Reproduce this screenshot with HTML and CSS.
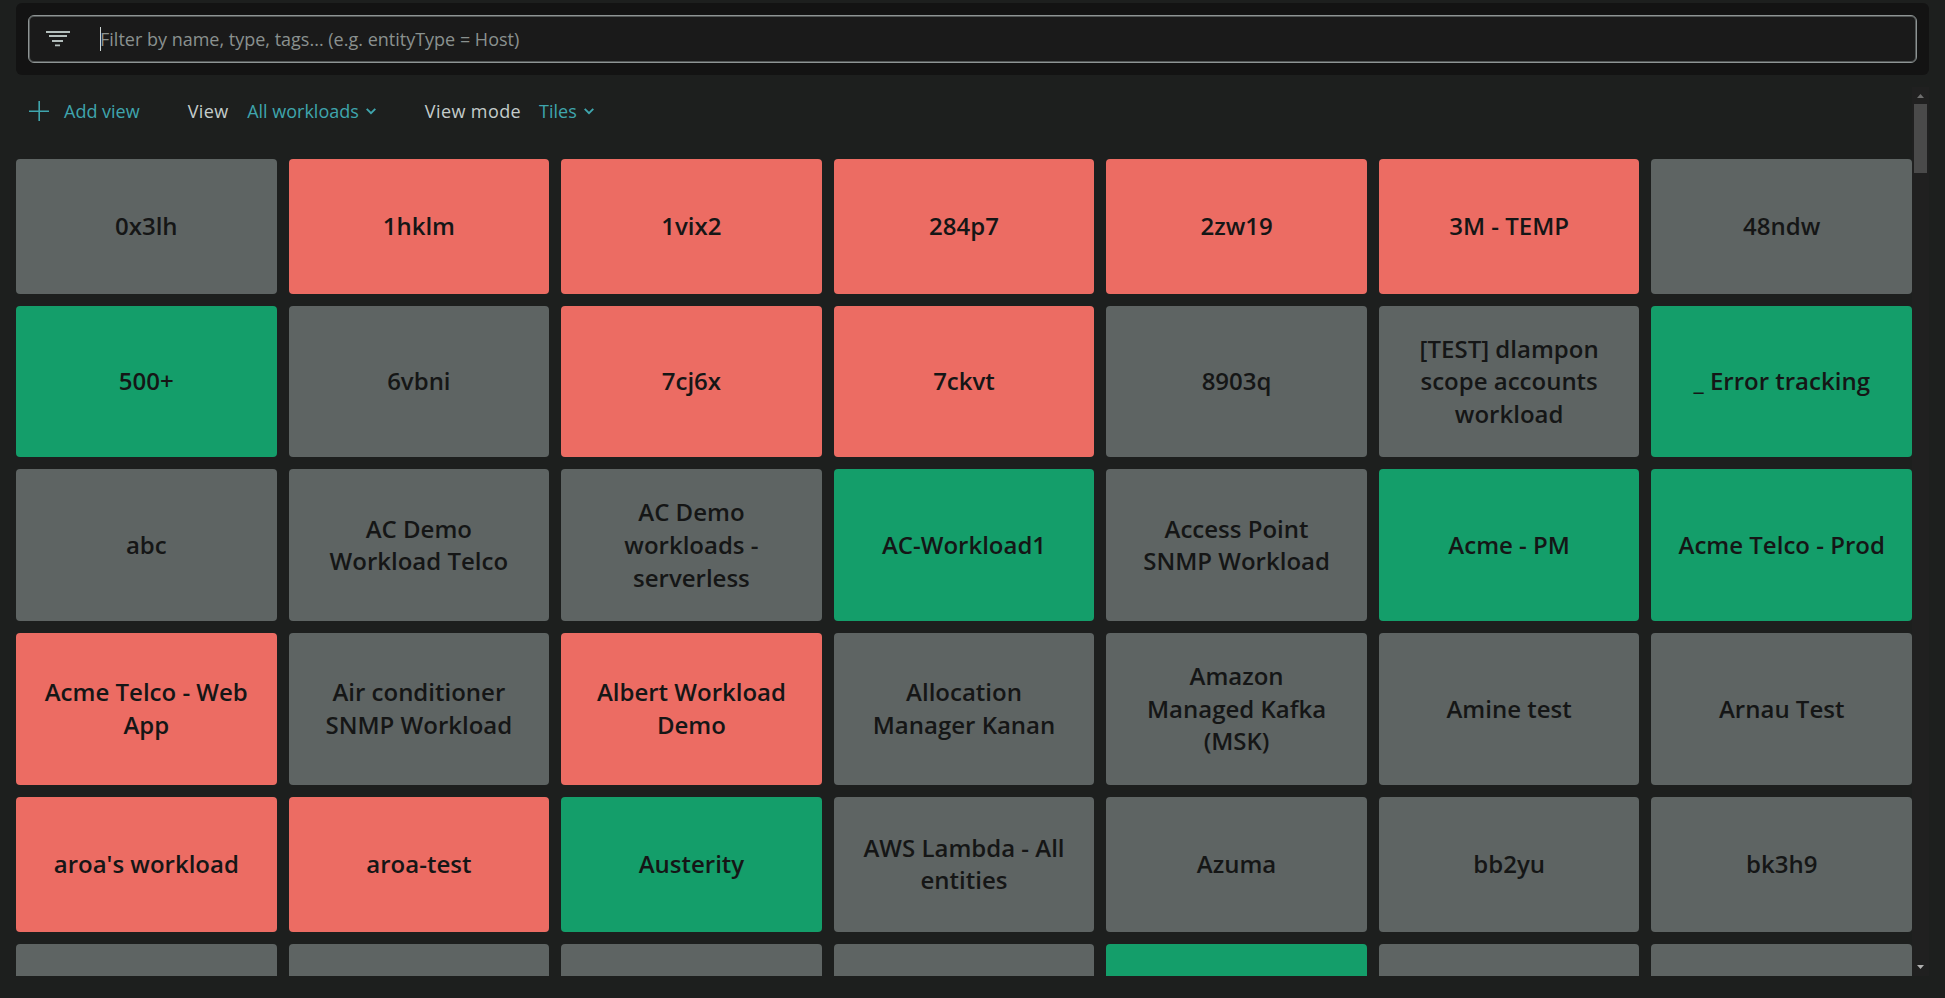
FILE: index.html
```html
<!DOCTYPE html>
<html lang="en">
<head>
<meta charset="utf-8">
<title>Workloads</title>
<link rel="stylesheet" href="styles.css">
</head>
<body>
<main class="page">
  <header class="filter-panel">
    <div class="filter">
      <svg class="filter-icon" width="24" height="16" viewBox="0 0 24 16"><path d="M0 1h24M3 5h18M6 10h11M9 14.3h5" fill="none" stroke="currentColor" stroke-width="1.8"/></svg>
      <span class="caret"></span>
      <span class="placeholder">Filter by name, type, tags... (e.g. entityType = Host)</span>
    </div>
  </header>
  <section class="content">
    <div class="scroll-area">
      <nav class="toolbar">
        <a class="add"><svg width="20" height="20" viewBox="0 0 20 20"><path d="M10.2 0v20M0 10.2h20" fill="none" stroke="currentColor" stroke-width="1.6"/></svg><span>Add view</span></a>
        <span class="label view">View</span>
        <a class="select all"><span>All workloads</span><svg width="10" height="7" viewBox="0 0 10 7"><path d="M.7.8 5 5.2 9.3.8" fill="none" stroke="currentColor" stroke-width="1.9"/></svg></a>
        <span class="label mode">View mode</span>
        <a class="select"><span>Tiles</span><svg width="10" height="7" viewBox="0 0 10 7"><path d="M.7.8 5 5.2 9.3.8" fill="none" stroke="currentColor" stroke-width="1.9"/></svg></a>
      </nav>
      <div class="tiles">
        <div class="tile">0x3lh</div><div class="tile red">1hklm</div><div class="tile red">1vix2</div><div class="tile red">284p7</div><div class="tile red">2zw19</div><div class="tile red">3M - TEMP</div><div class="tile">48ndw</div>
        <div class="tile green">500+</div><div class="tile">6vbni</div><div class="tile red">7cj6x</div><div class="tile red">7ckvt</div><div class="tile">8903q</div><div class="tile">[TEST] dlampon scope accounts workload</div><div class="tile green">_ Error tracking</div>
        <div class="tile">abc</div><div class="tile">AC Demo Workload Telco</div><div class="tile">AC Demo workloads - serverless</div><div class="tile green">AC-Workload1</div><div class="tile">Access Point SNMP Workload</div><div class="tile green">Acme - PM</div><div class="tile green">Acme Telco - Prod</div>
        <div class="tile red">Acme Telco - Web App</div><div class="tile">Air conditioner SNMP Workload</div><div class="tile red">Albert Workload Demo</div><div class="tile">Allocation Manager Kanan</div><div class="tile"><span>Amazon<br>Managed Kafka (MSK)</span></div><div class="tile">Amine test</div><div class="tile">Arnau Test</div>
        <div class="tile red">aroa's workload</div><div class="tile red">aroa-test</div><div class="tile green">Austerity</div><div class="tile">AWS Lambda - All entities</div><div class="tile">Azuma</div><div class="tile">bb2yu</div><div class="tile">bk3h9</div>
        <div class="tile"></div><div class="tile"></div><div class="tile"></div><div class="tile"></div><div class="tile green"></div><div class="tile"></div><div class="tile"></div>
      </div>
    </div>
    <div class="scrollbar">
      <svg class="arrow up" width="7" height="4" viewBox="0 0 7 4"><path d="M0 4 3.5 0 7 4z" fill="currentColor"/></svg>
      <div class="thumb"></div>
      <svg class="arrow down" width="7" height="4" viewBox="0 0 7 4"><path d="M0 0 3.5 4 7 0z" fill="currentColor"/></svg>
    </div>
  </section>
</main>
</body>
</html>
```
FILE: styles.css
```css
* { box-sizing: border-box; }
body {
  margin: 0;
  background: #1d1f1e;
  color: #c4cccb;
  font: 18px/24px "Open Sans", "Noto Sans", sans-serif;
}
svg { display: block; flex: none; }
.page {
  height: 998px;
  padding: 3px 16px 22px;
  display: flex;
  flex-direction: column;
  gap: 12px;
  overflow: hidden;
}
.filter-panel {
  height: 72px;
  flex: none;
  padding: 12px;
  background: #131313;
  border-radius: 6px;
}
.filter {
  height: 48px;
  display: flex;
  align-items: center;
  padding-left: 17px;
  border: 1px solid #8e9494;
  box-shadow: inset 0 0 0 1px #525656;
  background: #1a1a1a;
  border-radius: 6px;
}
.filter-icon { color: #b3bebc; margin-right: 30px; }
.caret { width: 1px; height: 24px; background: #ced6d4; margin-right: -1px; }
.placeholder { color: #8a918f; white-space: nowrap; }
.content { flex: 1; min-height: 0; display: flex; }
.scroll-area { width: 1896px; overflow: hidden; }
.toolbar {
  height: 72px;
  display: flex;
  align-items: center;
  padding: 0 13px 24px;
  white-space: nowrap;
}
.toolbar a { color: #3fa5ad; }
.add { display: flex; align-items: center; gap: 15px; margin-right: 48px; }
.label { letter-spacing: 0.4px; }
.label.view { margin-right: 18.5px; }
.select { display: flex; align-items: center; gap: 7px; }
.all { margin-right: 49px; }
.label.mode { margin-right: 18px; }
.tiles {
  display: grid;
  grid-template-columns: repeat(7, 1fr);
  grid-template-rows: 134.9px 151.56px 151.56px 152.3px 134.4px 135px;
  gap: 12px;
}
.tile {
  display: flex;
  align-items: center;
  justify-content: center;
  padding: 0 24px;
  text-align: center;
  color: #151616;
  background: #5e6463;
  border-radius: 4px;
  font-size: 24px;
  font-weight: 600;
  line-height: 32.7px;
}
.red { background: #ec6c63; }
.green { background: #149e6a; }
.scrollbar {
  width: 17px;
  background: #202020;
  display: flex;
  flex-direction: column;
  align-items: center;
  padding: 7px 0;
}
.thumb { width: 13px; height: 69px; margin-top: 6px; background: #4a4a4a; }
.arrow.up { color: #6f6f6f; }
.arrow.down { color: #b0b0b0; margin-top: auto; }
```
